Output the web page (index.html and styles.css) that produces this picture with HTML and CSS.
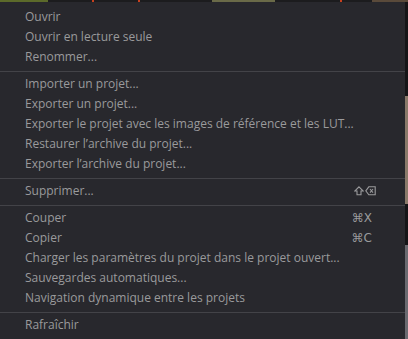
FILE: index.html
```html
<!DOCTYPE html>
<html lang="fr">
<head>
    <meta charset="UTF-8" />
    <title>Menu projet</title>
    <link rel="stylesheet" href="styles.css">
</head>
<body>

    <div class="fond-haut">
        <span class="vert"></span>
        <span class="point"></span>
        <span class="point loin"></span>
        <span class="texte"></span>
        <span class="point droite"></span>
        <span class="brun"></span>
    </div>

    <div class="ecran">
        <div class="menu">
            <div class="item">Ouvrir</div>
            <div class="item">Ouvrir en lecture seule</div>
            <div class="item">Renommer...</div>
            <div class="separateur"></div>
            <div class="item">Importer un projet...</div>
            <div class="item">Exporter un projet...</div>
            <div class="item">Exporter le projet avec les images de référence et les LUT...</div>
            <div class="item">Restaurer l’archive du projet...</div>
            <div class="item">Exporter l’archive du projet...</div>
            <div class="separateur"></div>
            <div class="item">Supprimer...
                <span class="icones">
                    <!-- shift -->
                    <svg width="10" height="10" viewBox="0 0 10 10">
                        <path d="M5 0.8 L9.2 5 L7 5 L7 8.8 L3 8.8 L3 5 L0.8 5 Z" />
                    </svg>
                    <!-- effacer -->
                    <svg width="11" height="10" viewBox="0 0 11 10">
                        <path d="M0.8 4.8 L3.8 0.8 L10.2 0.8 L10.2 8.8 L3.8 8.8 Z" />
                        <path d="M5 3 L8 6.6 M8 3 L5 6.6" />
                    </svg>
                </span>
            </div>
            <div class="separateur"></div>
            <div class="item">Couper <span class="raccourci">⌘X</span></div>
            <div class="item">Copier <span class="raccourci">⌘C</span></div>
            <div class="item">Charger les paramètres du projet dans le projet ouvert...</div>
            <div class="item">Sauvegardes automatiques...</div>
            <div class="item">Navigation dynamique entre les projets</div>
            <div class="separateur"></div>
            <div class="item">Rafraîchir</div>
        </div>
        <div class="bord-droit"></div>
    </div>

</body>
</html>
```

FILE: styles.css
```css
body {
    margin: 0;
    background-color: #141416;
    font-family: "Open Sans", "DejaVu Sans", sans-serif;
    height: 339px;
    overflow: hidden;
}

.fond-haut {
    display: flex;
    height: 2px;
    background: #1c1c1e;
}

.fond-haut .vert {
    width: 53px;
    background: #5c6a2a;
}

.fond-haut .point {
    width: 2px;
    margin-left: 44px;
    background: #c8401e;
}

.fond-haut .texte {
    width: 70px;
    margin-left: 72px;
    background: #6a6a48;
}

.fond-haut .point.droite {
    margin-left: 65px;
}

.fond-haut .brun {
    width: 40px;
    margin-left: 30px;
    background: #5a4a3a;
}

.ecran {
    display: flex;
    height: 337px;
}

.menu {
    width: 405px;
    background: #28282d;
    padding-top: 5px;
    box-sizing: border-box;
}

.item {
    display: flex;
    justify-content: space-between;
    align-items: center;
    height: 20px;
    line-height: 20px;
    padding: 0 33px 0 25px;
    font-size: 12px;
    color: #9a9a9c;
    white-space: nowrap;
}

.raccourci {
    font-family: "DejaVu Sans", sans-serif;
    font-size: 12px;
}

.icones {
    display: flex;
    gap: 1px;
    margin-right: -4px;
}

.icones svg {
    fill: none;
    stroke: #9a9a9c;
    stroke-width: 1.1;
}

.separateur {
    height: 1px;
    background: #434348;
    margin: 4px 0 2px;
}

.bord-droit {
    flex: 1;
    background: linear-gradient(#151517 0 28%, #8a7a6a 28% 60%, #151517 60% 72%, #6a6a70 72% 100%);
}
```
